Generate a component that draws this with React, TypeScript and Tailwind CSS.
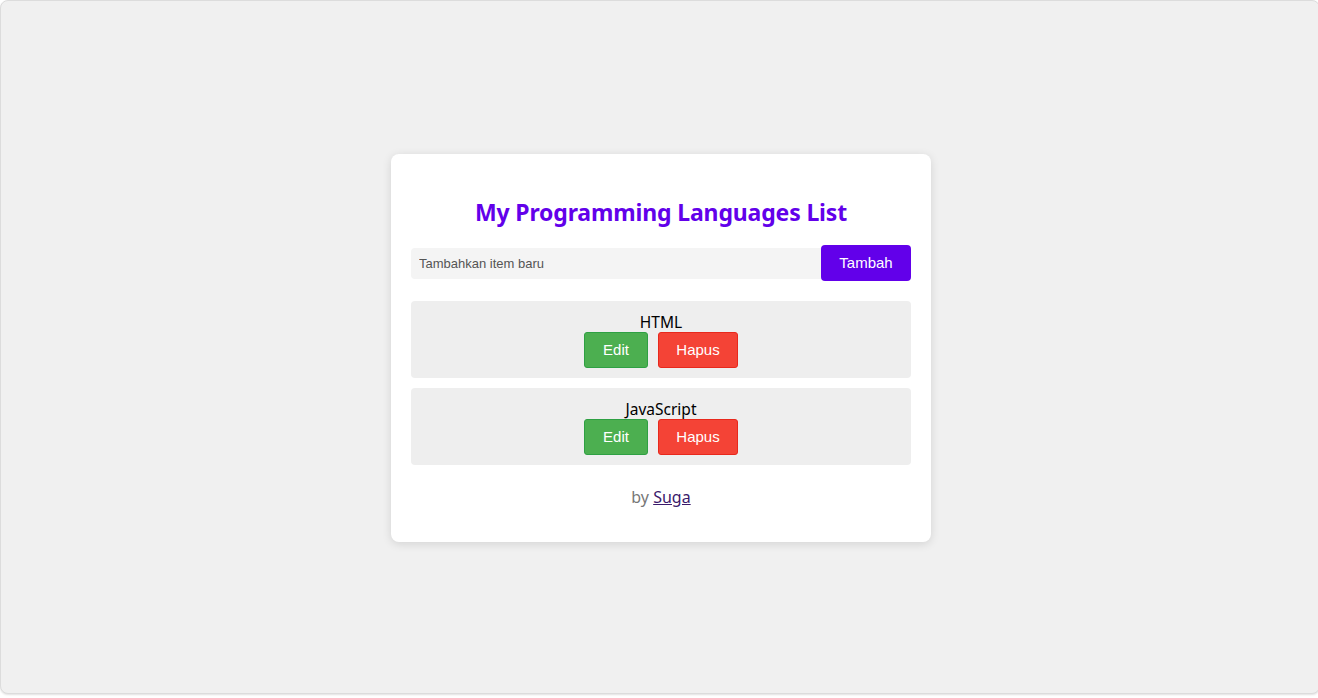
import * as React from "react";

type Item = {
  id: number;
  name: string;
};

export default function App() {
  const [items, setItems] = React.useState<Item[]>([
    { id: 1, name: "HTML" },
    { id: 2, name: "JavaScript" },
  ]);
  const [text, setText] = React.useState("");

  const add = () => {
    if (!text.trim()) return;
    setItems([...items, { id: Date.now(), name: text.trim() }]);
    setText("");
  };

  const remove = (id: number) => setItems(items.filter((i) => i.id !== id));

  return (
    <div className="h-[698px] bg-white font-['Noto_Sans',sans-serif]">
      {/* bingkai halaman */}
      <div className="flex h-[694px] w-[1320px] items-center justify-center rounded-lg border border-[#dcdcdc] bg-[#f0f0f0] pt-[2px] pl-[2px] shadow-[0_1px_2px_rgba(0,0,0,0.12)]">
        <div className="w-[540px] rounded-lg bg-white px-5 pt-[42px] pb-[33px] shadow-[0_2px_10px_rgba(0,0,0,0.12)]">
          <h1 className="text-center text-[23px] leading-8 font-bold tracking-[-0.15px] text-[#6200ea]">
            My Programming Languages List
          </h1>

          <div className="mt-[17px] flex items-center">
            <input
              value={text}
              onChange={(e) => setText(e.target.value)}
              placeholder="Tambahkan item baru"
              className="h-[31px] flex-1 rounded-l bg-[#f4f4f4] px-2 font-['Liberation_Sans',Arial,sans-serif] text-[13px] text-black outline-none placeholder:text-[#555]"
            />
            <button
              onClick={add}
              className="h-9 w-[90px] rounded bg-[#6200ea] font-['Liberation_Sans',Arial,sans-serif] text-[15px] text-white"
            >
              Tambah
            </button>
          </div>

          <ul className="mt-5 flex flex-col gap-[10px]">
            {items.map((item) => (
              <li
                key={item.id}
                className="flex flex-col items-center rounded bg-[#eeeeee] px-[10px] pt-[11px] pb-[10px]"
              >
                <span className="text-[15.5px] leading-[20px] text-black">
                  {item.name}
                </span>
                <div className="flex gap-[10px]">
                  <button className="h-9 w-16 rounded-[3px] border border-[#2ea043] bg-[#4caf50] font-['Liberation_Sans',Arial,sans-serif] text-[15px] text-white">
                    Edit
                  </button>
                  <button
                    onClick={() => remove(item.id)}
                    className="h-9 w-20 rounded-[3px] border border-[#e8281c] bg-[#f44336] font-['Liberation_Sans',Arial,sans-serif] text-[15px] text-white"
                  >
                    Hapus
                  </button>
                </div>
              </li>
            ))}
          </ul>

          <p className="mt-5 text-center text-[16px] leading-6 text-[#777]">
            by{" "}
            <a href="#" className="text-[#3b1a6b] underline">
              Suga
            </a>
          </p>
        </div>
      </div>
    </div>
  );
}
